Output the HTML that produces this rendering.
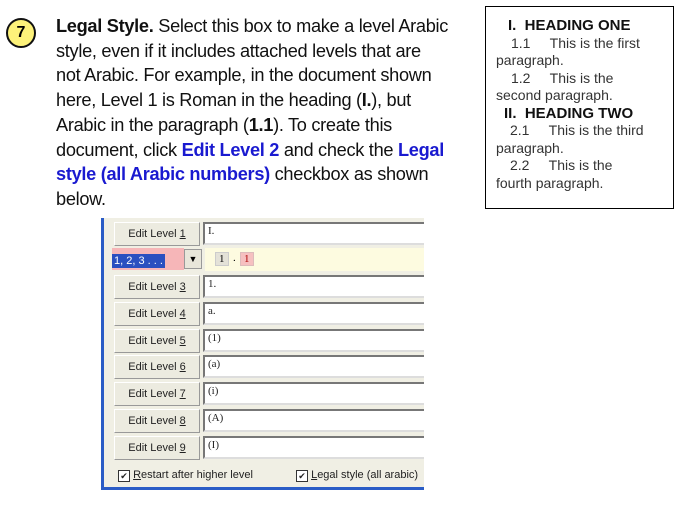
<!DOCTYPE html>
<html><head><style>
body{margin:0;width:682px;height:508px;background:#fff;position:relative;overflow:hidden;font-family:"Liberation Sans",sans-serif}
.circ{position:absolute;left:6px;top:18px;width:26px;height:26px;border:2px solid #111;border-radius:50%;background:#fdf27a;font:bold 16px "Liberation Sans",sans-serif;text-align:center;line-height:26px}
.txt{position:absolute;left:56px;top:14px;font-size:18.2px;line-height:24.7px;color:#111;white-space:nowrap;letter-spacing:-0.3px}
.b{color:#1a1ad0;font-weight:bold}
.box{position:absolute;left:485px;top:6px;width:187px;height:201px;border:1px solid #000;font-size:14px;color:#333;line-height:17.5px}
.box div{white-space:nowrap}
.h{font-weight:bold;color:#111;font-size:15px}
.dlg{position:absolute;left:101px;top:218px;width:323px;height:272px;background:#f0efe4;border-left:3px solid #2a5cc6;border-bottom:3px solid #2a5cc6;box-sizing:border-box;overflow:hidden}
.btn{position:absolute;left:10px;width:86px;height:24px;background:#ecebe0;border:1px solid #fff;border-right-color:#999;border-bottom-color:#999;box-sizing:border-box;font-size:11px;text-align:center;line-height:22px;color:#222}
.inp{position:absolute;left:99px;width:230px;height:23px;background:#fff;border:2px solid #777;border-right:none;border-bottom-color:#ddd;box-sizing:border-box;font:11px "Liberation Serif",serif;padding:1px 3px;color:#222}
u{text-decoration:underline}
</style></head><body>
<div class="circ">7</div>
<div class="txt"><b>Legal Style.</b> Select this box to make a level Arabic<br>style, even if it includes attached levels that are<br>not Arabic. For example, in the document shown<br>here, Level 1 is Roman in the heading (<b>I.</b>), but<br>Arabic in the paragraph (<b>1.1</b>). To create this<br>document, click <span class="b">Edit Level 2</span> and check the <span class="b">Legal</span><br><span class="b">style (all Arabic numbers)</span> checkbox as shown<br>below.</div>
<div class="box">
<div class="h" style="padding-left:22px;margin-top:10px">I.&nbsp; HEADING ONE</div>
<div style="padding-left:25px">1.1&nbsp;&nbsp;&nbsp;&nbsp; This is the first</div>
<div style="padding-left:10px">paragraph.</div>
<div style="padding-left:25px">1.2&nbsp;&nbsp;&nbsp;&nbsp; This is the</div>
<div style="padding-left:10px">second paragraph.</div>
<div class="h" style="padding-left:18px">II.&nbsp; HEADING TWO</div>
<div style="padding-left:24px">2.1&nbsp;&nbsp;&nbsp;&nbsp; This is the third</div>
<div style="padding-left:10px">paragraph.</div>
<div style="padding-left:24px">2.2&nbsp;&nbsp;&nbsp;&nbsp; This is the</div>
<div style="padding-left:10px">fourth paragraph.</div>
</div>
<div class="dlg">
<div class="btn" style="top:4px">Edit Level <u>1</u></div><div class="inp" style="top:4px">I.</div>
<div style="position:absolute;left:8px;top:30px;width:72px;height:22px;background:#f6b6b8"><span style="background:#2a4fc0;color:#fff;font-size:11px;padding:1px 2px;position:relative;top:3px">1, 2, 3 . . .</span></div>
<div style="position:absolute;left:80px;top:31px;width:18px;height:20px;background:#e8e6da;border:1px solid #999;box-sizing:border-box;font-size:9px;text-align:center;line-height:18px">▼</div>
<div style="position:absolute;left:101px;top:30px;width:222px;height:23px;background:#fdfbe0;font:11px 'Liberation Serif',serif"><span style="position:absolute;left:10px;top:4px;background:#e4e2d8;border:1px solid #ccc;padding:0 3px">1</span><span style="position:absolute;left:28px;top:4px">.</span><span style="position:absolute;left:35px;top:4px;background:#f6c0c0;border:1px solid #dbb;padding:0 3px;color:#a00">1</span></div>
<div class="btn" style="top:57px">Edit Level <u>3</u></div><div class="inp" style="top:57px">1.</div>
<div class="btn" style="top:84px">Edit Level <u>4</u></div><div class="inp" style="top:84px">a.</div>
<div class="btn" style="top:111px">Edit Level <u>5</u></div><div class="inp" style="top:111px">(1)</div>
<div class="btn" style="top:137px">Edit Level <u>6</u></div><div class="inp" style="top:137px">(a)</div>
<div class="btn" style="top:164px">Edit Level <u>7</u></div><div class="inp" style="top:164px">(i)</div>
<div class="btn" style="top:191px">Edit Level <u>8</u></div><div class="inp" style="top:191px">(A)</div>
<div class="btn" style="top:218px">Edit Level <u>9</u></div><div class="inp" style="top:218px">(I)</div>
<div style="position:absolute;left:14px;top:251px;font-size:11px;color:#222;white-space:nowrap"><span style="display:inline-block;width:10px;height:10px;border:1px solid #333;background:#fff;font-size:9px;line-height:10px;text-align:center;vertical-align:-1px">✔</span> <u>R</u>estart after higher level</div>
<div style="position:absolute;left:192px;top:251px;font-size:11px;color:#222;white-space:nowrap"><span style="display:inline-block;width:10px;height:10px;border:1px solid #333;background:#fff;font-size:9px;line-height:10px;text-align:center;vertical-align:-1px">✔</span> <u>L</u>egal style (all arabic)</div>
</div>
</body></html>
